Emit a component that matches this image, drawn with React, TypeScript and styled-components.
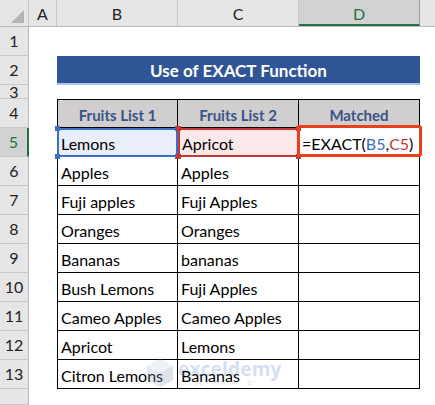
import React from "react";
import styled, { createGlobalStyle } from "styled-components";

const Global = createGlobalStyle`
  html, body { margin: 0; padding: 0; background: #ffffff; }
  body { width: 435px; height: 405px; overflow: hidden; font-family: Lato, "Open Sans", sans-serif; }
`;

const COLS = [29, 28, 121, 121, 121, 15];
const FONT = `Lato, "Open Sans", sans-serif`;

const Sheet = styled.div`
  position: relative;
  width: 435px;
  height: 405px;
  display: flex;
  flex-direction: column;
  background: #ffffff;
  font-family: ${FONT};
`;

const HeaderRow = styled.div`
  display: flex;
  height: 27px;
  background: #e6e6e6;
  border-bottom: 1px solid #b8b8b8;
  box-sizing: border-box;
  flex: none;
`;

const Corner = styled.div`
  width: ${COLS[0]}px;
  flex: none;
  display: flex;
  align-items: flex-end;
  justify-content: flex-end;
  padding: 0 4px 3px 0;
  box-sizing: border-box;
  border-right: 1px solid #c8c8c8;
`;

const ColHead = styled.div<{ $w: number; $sel?: boolean; $last?: boolean }>`
  width: ${(p) => p.$w}px;
  flex: ${(p) => (p.$last ? "1" : "none")};
  box-sizing: border-box;
  display: flex;
  align-items: center;
  justify-content: center;
  font-size: 16px;
  color: ${(p) => (p.$sel ? "#217346" : "#222222")};
  background: ${(p) => (p.$sel ? "#d2d2d2" : "#e6e6e6")};
  border-right: ${(p) => (p.$last ? "none" : p.$sel ? "1px solid #9a9a9a" : "1px solid #c8c8c8")};
  border-bottom: ${(p) => (p.$sel ? "2px solid #217346" : "none")};
  padding-top: ${(p) => (p.$sel ? "2px" : "0")};
`;

const Row = styled.div<{ $h: number }>`
  display: flex;
  height: ${(p) => p.$h}px;
  flex: none;
`;

const FillRow = styled.div`
  display: flex;
  flex: 1;
`;

const RowHead = styled.div<{ $sel?: boolean }>`
  width: ${COLS[0]}px;
  flex: none;
  box-sizing: border-box;
  display: flex;
  align-items: center;
  justify-content: center;
  font-size: 16px;
  color: ${(p) => (p.$sel ? "#217346" : "#222222")};
  background: ${(p) => (p.$sel ? "#d2d2d2" : "#e6e6e6")};
  border-right: ${(p) => (p.$sel ? "2px solid #217346" : "1px solid #b8b8b8")};
  border-bottom: 1px solid #c8c8c8;
  overflow: hidden;
  line-height: 1;
`;

const Blank = styled.div<{ $w: number }>`
  width: ${(p) => p.$w}px;
  flex: none;
`;

const Title = styled.div`
  width: 363px;
  flex: none;
  box-sizing: border-box;
  background: #2f5597;
  border-bottom: 2px solid #a9c8e8;
  color: #ffffff;
  font-weight: 700;
  font-size: 17px;
  display: flex;
  align-items: center;
  justify-content: center;
  padding-top: 1px;
`;

const Cell = styled.div<{ $head?: boolean; $top?: boolean; $first?: boolean; $center?: boolean }>`
  position: relative;
  width: 121px;
  flex: none;
  box-sizing: border-box;
  border-right: 1px solid #000000;
  border-bottom: 1px solid #000000;
  border-top: ${(p) => (p.$top ? "1px solid #000000" : "none")};
  border-left: ${(p) => (p.$first ? "1px solid #000000" : "none")};
  background: ${(p) => (p.$head ? "#d0cece" : "#ffffff")};
  color: ${(p) => (p.$head ? "#3a5488" : "#000000")};
  font-weight: ${(p) => (p.$head ? 700 : 400)};
  font-size: ${(p) => (p.$head ? "15px" : "16px")};
  display: flex;
  align-items: center;
  justify-content: ${(p) => (p.$center ? "center" : "flex-start")};
  padding-left: ${(p) => (p.$center ? "0" : "3px")};
  padding-top: 2px;
  white-space: nowrap;
`;

const RefCell = styled(Cell)<{ $tone: "blue" | "red" }>`
  background: ${(p) => (p.$tone === "blue" ? "#e9eef8" : "#fbe9e9")};
  border: none;
  box-shadow: inset 0 0 0 2px ${(p) => (p.$tone === "blue" ? "#3a6fc4" : "#c4383b")};
  padding-left: 4px;
`;

const Handle = styled.span<{ $tone: "blue" | "red"; $x: "l" | "r"; $y: "t" | "b" }>`
  position: absolute;
  width: 5px;
  height: 5px;
  background: ${(p) => (p.$tone === "blue" ? "#3a6fc4" : "#c4383b")};
  ${(p) => (p.$x === "l" ? "left: -2px;" : "right: -2px;")}
  ${(p) => (p.$y === "t" ? "top: -2px;" : "bottom: -2px;")}
  z-index: 2;
`;

const FormulaBox = styled.span`
  position: absolute;
  left: -2px;
  right: -3px;
  top: -3px;
  bottom: -1px;
  border: 3.5px solid #e8401c;
  border-radius: 3px;
  pointer-events: none;
  z-index: 3;
`;

const Ref = styled.span<{ $c: string }>`
  color: ${(p) => p.$c};
`;

const Watermark = styled.div`
  position: absolute;
  left: 146px;
  top: 358px;
  display: flex;
  align-items: center;
  gap: 4px;
  opacity: 0.25;
  pointer-events: none;
  z-index: 4;
`;

const WmText = styled.div`
  display: flex;
  flex-direction: column;
  line-height: 1;
`;

const WmBig = styled.span`
  font-family: "Open Sans", sans-serif;
  font-weight: 700;
  font-size: 19px;
  color: #5b7fd6;
  letter-spacing: 0.2px;
`;

const WmSmall = styled.span`
  font-family: "Open Sans", sans-serif;
  font-size: 6.5px;
  color: #8a8a8a;
  letter-spacing: 1.6px;
  margin-top: 1px;
`;

const rows: [string, string][] = [
  ["Apples", "Apples"],
  ["Fuji apples", "Fuji Apples"],
  ["Oranges", "Oranges"],
  ["Bananas", "bananas"],
  ["Bush Lemons", "Fuji Apples"],
  ["Cameo Apples", "Cameo Apples"],
  ["Apricot", "Lemons"],
  ["Citron Lemons", "Bananas"],
];

function Handles({ tone }: { tone: "blue" | "red" }) {
  return (
    <>
      <Handle $tone={tone} $x="l" $y="t" />
      <Handle $tone={tone} $x="r" $y="t" />
      <Handle $tone={tone} $x="l" $y="b" />
      <Handle $tone={tone} $x="r" $y="b" />
    </>
  );
}

export default function App() {
  return (
    <>
      <Global />
      <Sheet>
        <HeaderRow>
          <Corner>
            <svg width="13" height="13" viewBox="0 0 13 13">
              <polygon points="13,0 13,13 0,13" fill="#b4b4b4" />
            </svg>
          </Corner>
          <ColHead $w={COLS[1]}>A</ColHead>
          <ColHead $w={COLS[2]}>B</ColHead>
          <ColHead $w={COLS[3]}>C</ColHead>
          <ColHead $w={COLS[4]} $sel>D</ColHead>
          <ColHead $w={COLS[5]} $last />
        </HeaderRow>

        <Row $h={29}>
          <RowHead>1</RowHead>
        </Row>
        <Row $h={29}>
          <RowHead>2</RowHead>
          <Blank $w={COLS[1]} />
          <Title>Use of EXACT Function</Title>
        </Row>
        <Row $h={14}>
          <RowHead>3</RowHead>
        </Row>
        <Row $h={29}>
          <RowHead>4</RowHead>
          <Blank $w={COLS[1]} />
          <Cell $head $top $first $center>Fruits List 1</Cell>
          <Cell $head $top $center>Fruits List 2</Cell>
          <Cell $head $top $center>Matched</Cell>
        </Row>
        <Row $h={29}>
          <RowHead $sel>5</RowHead>
          <Blank $w={COLS[1]} />
          <RefCell $tone="blue">
            Lemons
            <Handles tone="blue" />
          </RefCell>
          <RefCell $tone="red">
            Apricot
            <Handles tone="red" />
          </RefCell>
          <Cell>
            =EXACT(<Ref $c="#3a6fc4">B5</Ref>,<Ref $c="#c4383b">C5</Ref>)
            <FormulaBox />
          </Cell>
        </Row>
        {rows.map(([b, c], i) => (
          <Row $h={29} key={i}>
            <RowHead>{i + 6}</RowHead>
            <Blank $w={COLS[1]} />
            <Cell $first>{b}</Cell>
            <Cell>{c}</Cell>
            <Cell />
          </Row>
        ))}
        <FillRow>
          <RowHead />
        </FillRow>

        <Watermark>
          <svg width="28" height="30" viewBox="0 0 28 30">
            <polygon points="14,1 27,8 27,22 14,29 1,22 1,8" fill="#9aa9c9" />
            <polygon points="14,1 27,8 14,15 1,8" fill="#c3cde3" />
            <polygon points="14,15 27,8 27,22 14,29" fill="#7d8fb8" />
          </svg>
          <WmText>
            <WmBig>exceldemy</WmBig>
            <WmSmall>EXCEL · DATA · BI</WmSmall>
          </WmText>
        </Watermark>
      </Sheet>
    </>
  );
}
